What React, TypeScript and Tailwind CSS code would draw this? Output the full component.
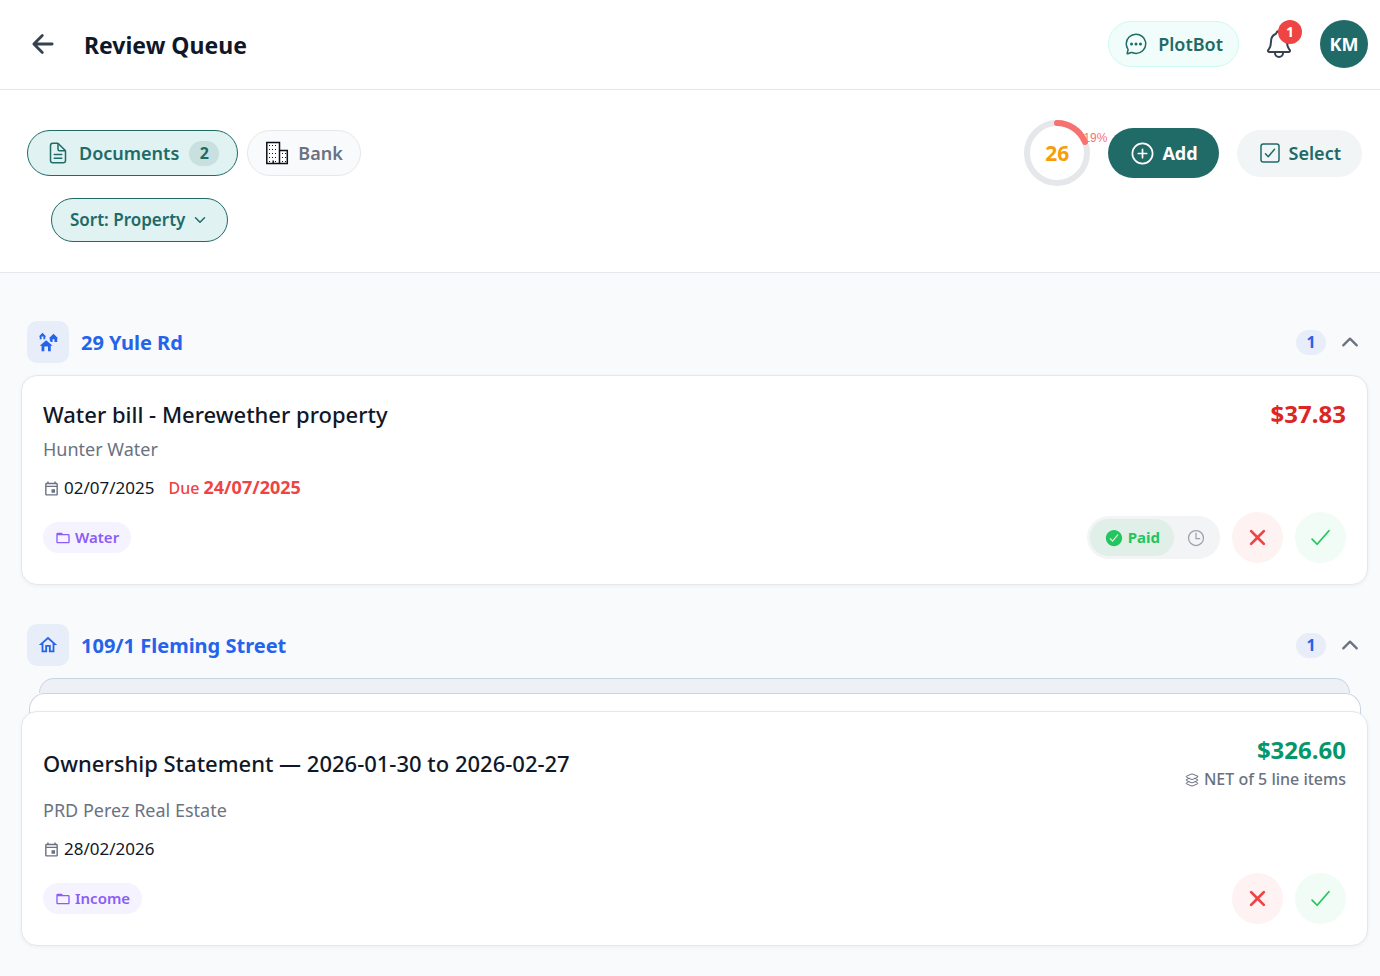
import { useState } from 'react';
import {
    IoAddCircleOutline,
    IoArrowBack,
    IoChatbubbleEllipsesOutline,
    IoCheckboxOutline,
    IoCheckmark,
    IoCheckmarkCircle,
    IoChevronDown,
    IoChevronUp,
    IoClose,
    IoDocumentTextOutline,
    IoLayersOutline,
    IoNotificationsOutline,
    IoTimeOutline,
} from 'react-icons/io5';
import { MdFolderOpen, MdOutlineEvent } from 'react-icons/md';

type QueueItem = {
    id: string;
    title: string;
    vendor: string;
    date: string;
    due?: string;
    category: string;
    amount: string;
    income: boolean;
    lineItems?: number;
};

type PropertyGroup = {
    name: string;
    icon: 'group' | 'home';
    items: QueueItem[];
};

const GROUPS: PropertyGroup[] = [
    {
        name: '29 Yule Rd',
        icon: 'group',
        items: [
            {
                id: 'water',
                title: 'Water bill - Merewether property',
                vendor: 'Hunter Water',
                date: '02/07/2025',
                due: '24/07/2025',
                category: 'Water',
                amount: '$37.83',
                income: false,
            },
        ],
    },
    {
        name: '109/1 Fleming Street',
        icon: 'home',
        items: [
            {
                id: 'ownership',
                title: 'Ownership Statement — 2026-01-30 to 2026-02-27',
                vendor: 'PRD Perez Real Estate',
                date: '28/02/2026',
                category: 'Income',
                amount: '$326.60',
                income: true,
                lineItems: 5,
            },
        ],
    },
];

const HOME_PATHS = {
    group: 'M17 16H15V22H12V17H8V22H5V16H3L10 10L17 16M6 2L10 6H9V9H7V6H5V9H3V6H2L6 2M18 3L23 8H22V12H19V9H17V12H15.34L14 10.87V8H13L18 3Z',
    home: 'M12 5.69L17 10.19V18H15V12H9V18H7V10.19L12 5.69M12 3L2 12H5V20H11V14H13V20H19V12H22L12 3Z',
};

function BuildingIcon() {
    return (
        <svg className="h-6 w-6" viewBox="0 0 24 24" fill="none" stroke="#0b0f19" strokeWidth={1.5} aria-hidden="true">
            <path fill="#fff" d="M1.8 1.5H14.5V22.5H1.8ZM14.5 9.5H22.3V22.5H14.5Z" />
            <path strokeWidth={1} strokeDasharray="1 2" d="M4 4.5H13M4 8.5H13M4 12.5H13M4 16.5H13M17 12.5H21M17 16.5H21" />
            <path strokeWidth={1} strokeDasharray="1 2" d="M4 20.5H6M10 20.5H13M17 20.5H21" />
            <path strokeWidth={1.5} d="M8.2 19.5V22" />
        </svg>
    );
}

/* Score ring: percentage arc around the total */
function ScoreRing({ score, percent }: { score: number; percent: number }) {
    const length = 2 * Math.PI * 30;
    return (
        <div className="relative flex h-[66px] w-[66px] items-center justify-center">
            <svg className="absolute inset-0 -rotate-90" viewBox="0 0 66 66" fill="none" strokeWidth={6}>
                <circle cx="33" cy="33" r="30" stroke="#e5e7eb" />
                <circle cx="33" cy="33" r="30" stroke="#f87171" strokeLinecap="round" strokeDasharray={`${(length * percent) / 100} ${length}`} />
            </svg>
            <span className="pt-0.5 text-[21px] font-bold text-[#f59e0b]">{score}</span>
            <span className="absolute top-[10px] left-[59px] font-['Liberation_Sans'] text-xs text-[#f87171]">{percent}%</span>
        </div>
    );
}

function QueueCard({ item }: { item: QueueItem }) {
    const [paid, setPaid] = useState(true);

    return (
        <article className="relative rounded-2xl border border-gray-200 bg-white p-[21px] shadow-[0_1px_4px_rgba(0,0,0,0.05)]">
            <div className="flex items-center justify-between">
                <h3 className="text-[22px] leading-[34px] font-medium text-gray-900">{item.title}</h3>
                <div className="text-right">
                    <p className={`text-2xl leading-[34px] font-bold ${item.income ? 'text-[#059669]' : 'text-[#dc2626]'}`}>{item.amount}</p>
                    {item.lineItems && (
                        <p className="flex items-center gap-1 text-base leading-[25px] font-medium text-gray-500">
                            <IoLayersOutline className="h-4 w-4" />
                            NET of {item.lineItems} line items
                        </p>
                    )}
                </div>
            </div>
            <p className="mt-[5px] text-lg leading-[26px] text-gray-500">{item.vendor}</p>
            <div className="mt-[14px] flex h-6 items-center text-[17px] leading-6 text-gray-900">
                <MdOutlineEvent className="mr-1 h-[17px] w-[17px] text-gray-500" />
                {item.date}
                {item.due && (
                    <span className="ml-[14px] text-base leading-6 font-medium text-[#ef4444]">
                        Due <strong className="text-lg leading-none font-bold">{item.due}</strong>
                    </span>
                )}
            </div>
            <div className="mt-3 flex items-center gap-3">
                <span className="mr-auto flex h-[31px] items-center gap-1 rounded-full bg-[#f5f3ff] px-3 text-[15px] font-semibold text-[#8b5cf6]">
                    <MdFolderOpen className="h-4 w-4" />
                    {item.category}
                </span>
                {!item.income && (
                    <div className="flex h-[43px] items-center rounded-full bg-[#f3f4f6] p-[3px]">
                        <button
                            type="button"
                            aria-pressed={paid}
                            onClick={() => setPaid(true)}
                            className="flex h-[37px] items-center gap-1 rounded-full bg-[#e0efe7] px-[14px] text-[15px] font-bold text-[#22c55e]"
                        >
                            <IoCheckmarkCircle className="h-5 w-5" />
                            Paid
                        </button>
                        <button type="button" aria-label="Unpaid" onClick={() => setPaid(false)} className="flex h-[37px] w-[43px] items-center justify-center text-gray-400">
                            <IoTimeOutline className="h-5 w-5" />
                        </button>
                    </div>
                )}
                <button type="button" aria-label="Reject" className="flex h-[51px] w-[51px] items-center justify-center rounded-full bg-[#fef2f2] text-[#ef4444]">
                    <IoClose className="h-[29px] w-[29px]" />
                </button>
                <button type="button" aria-label="Approve" className="flex h-[51px] w-[51px] items-center justify-center rounded-full bg-[#f0fcf5] text-[#22c55e]">
                    <IoCheckmark className="h-[27px] w-[27px]" />
                </button>
            </div>
        </article>
    );
}

function PropertySection({ group }: { group: PropertyGroup }) {
    const [open, setOpen] = useState(true);

    return (
        <section>
            <button type="button" aria-expanded={open} onClick={() => setOpen(!open)} className="flex w-full items-center pr-[6px] pl-[6px] text-[#2563eb]">
                <span className="flex h-[42px] w-[42px] items-center justify-center rounded-[10px] bg-[#e7edf9]">
                    <svg className="h-[22px] w-[22px]" viewBox="0 0 24 24" fill="currentColor" aria-hidden="true">
                        <path d={HOME_PATHS[group.icon]} />
                    </svg>
                </span>
                <span className="ml-3 pt-0.5 text-xl font-bold">{group.name}</span>
                <span className="mr-3 ml-auto flex h-[25px] w-[30px] items-center justify-center rounded-full bg-[#e7edf9] text-base font-bold">{group.items.length}</span>
                <IoChevronUp className="h-6 w-6 text-gray-500" />
            </button>
            {open && group.items.map((item) => (
                <div key={item.id} className="mt-3">
                    {/* Statement cards sit on top of a pile of line items */}
                    {item.lineItems && (
                        <>
                            <div className="mr-[18px] ml-[18px] h-[15px] rounded-t-2xl border border-b-0 border-[#cbd5e1] bg-[#edf0f5]" />
                            <div className="mr-[7px] -mb-2 ml-2 h-[26px] rounded-t-2xl border border-b-0 border-[#cbd5e1] bg-white" />
                        </>
                    )}
                    <QueueCard item={item} />
                </div>
            ))}
        </section>
    );
}

export default function App() {
    const [tab, setTab] = useState('documents');

    return (
        <div className="min-h-screen bg-[#f9fafc] font-['Noto_Sans',sans-serif]">
            <header className="flex h-[90px] items-center border-b border-gray-200 bg-white pr-3 pb-px pl-7">
                <button type="button" aria-label="Back" className="text-[#374151]">
                    <IoArrowBack className="h-[30px] w-[30px]" />
                </button>
                <h1 className="mr-auto ml-[26px] pt-0.5 text-[23px] font-bold text-gray-900">Review Queue</h1>
                <button type="button" className="flex h-[46px] items-center gap-[10px] rounded-full border border-[#ccfbf1] bg-[#f0fdfa] px-[15px] text-lg font-semibold text-[#206a68]">
                    <IoChatbubbleEllipsesOutline className="h-6 w-6" />
                    PlotBot
                </button>
                <button type="button" aria-label="Notifications" className="relative ml-6 text-[#374151]">
                    <IoNotificationsOutline className="h-8 w-8" />
                    <span className="absolute -top-2 left-[15px] flex h-6 w-6 items-center justify-center rounded-full bg-[#ef4444] text-sm font-bold text-white">1</span>
                </button>
                <button type="button" className="ml-[25px] h-12 w-12 rounded-full bg-[#206a68] text-lg font-bold text-white">KM</button>
            </header>

            <div className="border-b border-gray-200 bg-white pt-[30px] pr-[18px] pb-[30px] pl-[27px]">
                <div className="flex items-center">
                    <button
                        type="button"
                        aria-pressed={tab === 'documents'}
                        onClick={() => setTab('documents')}
                        className="flex h-[46px] items-center rounded-full border border-[#206a68] bg-[#e0f2f1] px-[18px] text-lg font-semibold text-[#206a68]"
                    >
                        <IoDocumentTextOutline className="mr-[9px] h-6 w-6" />
                        Documents
                        <span className="ml-[10px] flex h-[25px] w-[30px] items-center justify-center rounded-full bg-[#c8e0df] text-base font-bold">2</span>
                    </button>
                    <button
                        type="button"
                        aria-pressed={tab === 'bank'}
                        onClick={() => setTab('bank')}
                        className="ml-[9px] flex h-[46px] items-center gap-[9px] rounded-full border border-gray-200 bg-[#f9fafb] px-[17px] text-lg font-semibold text-gray-500"
                    >
                        <BuildingIcon />
                        Bank
                    </button>
                    <div className="ml-auto flex items-center gap-[18px]">
                        <ScoreRing score={26} percent={19} />
                        <button type="button" className="flex h-[50px] items-center gap-[6px] rounded-full bg-[#206a68] px-[21px] text-lg font-bold text-white">
                            <IoAddCircleOutline className="h-[27px] w-[27px]" />
                            Add
                        </button>
                        <button type="button" className="flex h-[47px] items-center gap-[7px] rounded-full bg-[#f1f5f6] px-[21px] text-lg font-semibold text-[#206a68]">
                            <IoCheckboxOutline className="h-6 w-6" />
                            Select
                        </button>
                    </div>
                </div>
                <div className="relative mt-3 ml-6 w-fit text-[#206a68]">
                    <select aria-label="Sort order" className="h-11 w-[177px] appearance-none rounded-full border border-[#206a68] bg-[#e0f2f1] pr-10 pl-[18px] text-[17px] font-semibold">
                        <option>Sort: Property</option>
                        <option>Sort: Date</option>
                        <option>Sort: Amount</option>
                    </select>
                    <IoChevronDown className="pointer-events-none absolute top-[14px] right-5 h-4 w-4" />
                </div>
            </div>

            <main className="flex flex-col gap-[39px] pt-12 pr-3 pb-[30px] pl-[21px]">
                {GROUPS.map((group) => (
                    <PropertySection key={group.name} group={group} />
                ))}
            </main>
        </div>
    );
}
